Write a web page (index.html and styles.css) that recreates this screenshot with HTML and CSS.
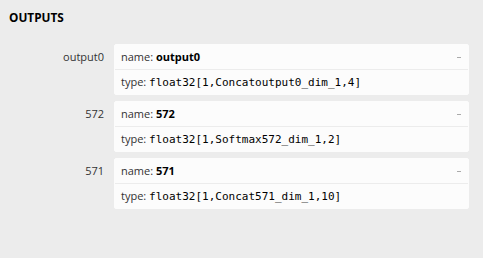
FILE: index.html
```html
<!DOCTYPE html>
<html>
<head>
<meta charset="utf-8">
<link rel="stylesheet" href="styles.css">
</head>
<body>
<div class="sidebar">
  <div class="section-title">OUTPUTS</div>
  <div class="items">
    <div class="item">
      <div class="item-name">output0</div>
      <div class="item-value">
        <div class="line">name: <b>output0</b><span class="expander"></span></div>
        <div class="line line-sep">type: <code>float32[1,Concatoutput0_dim_1,4]</code></div>
      </div>
    </div>
    <div class="item">
      <div class="item-name">572</div>
      <div class="item-value">
        <div class="line">name: <b>572</b><span class="expander"></span></div>
        <div class="line line-sep">type: <code>float32[1,Softmax572_dim_1,2]</code></div>
      </div>
    </div>
    <div class="item">
      <div class="item-name">571</div>
      <div class="item-value">
        <div class="line">name: <b>571</b><span class="expander"></span></div>
        <div class="line line-sep">type: <code>float32[1,Concat571_dim_1,10]</code></div>
      </div>
    </div>
  </div>
</div>
</body>
</html>
```

FILE: styles.css
```css
html, body {
  margin: 0;
  padding: 0;
  background: #ececec;
}
body {
  font-family: "Open Sans", "Noto Sans", sans-serif;
  font-size: 11px;
  color: #000;
}
.sidebar {
  padding: 9px 14px 0 9px;
}
.section-title {
  font-weight: bold;
  font-size: 11.8px;
  line-height: 16px;
  color: #000;
}
.items {
  display: flex;
  flex-direction: column;
  gap: 6px;
  margin-top: 19px;
}
.item {
  display: flex;
  gap: 10px;
}
.item-name {
  width: 95px;
  text-align: right;
  line-height: 25px;
  color: #333;
}
.item-value {
  width: 353px;
  background: #fcfcfc;
  border: 1px solid #fcfcfc;
  border-radius: 2px;
}
.line {
  position: relative;
  height: 24px;
  line-height: 24px;
  padding-left: 6px;
  color: #333;
}
.line b {
  color: #000;
  font-weight: bold;
}
.line-sep {
  border-top: 1px solid #ececec;
}
.line code {
  font-family: "DejaVu Sans Mono", monospace;
  font-size: 11px;
  color: #000;
}
.expander {
  position: absolute;
  right: 7px;
  top: 12px;
  width: 4px;
  height: 1px;
  background: #aaa;
}
```
